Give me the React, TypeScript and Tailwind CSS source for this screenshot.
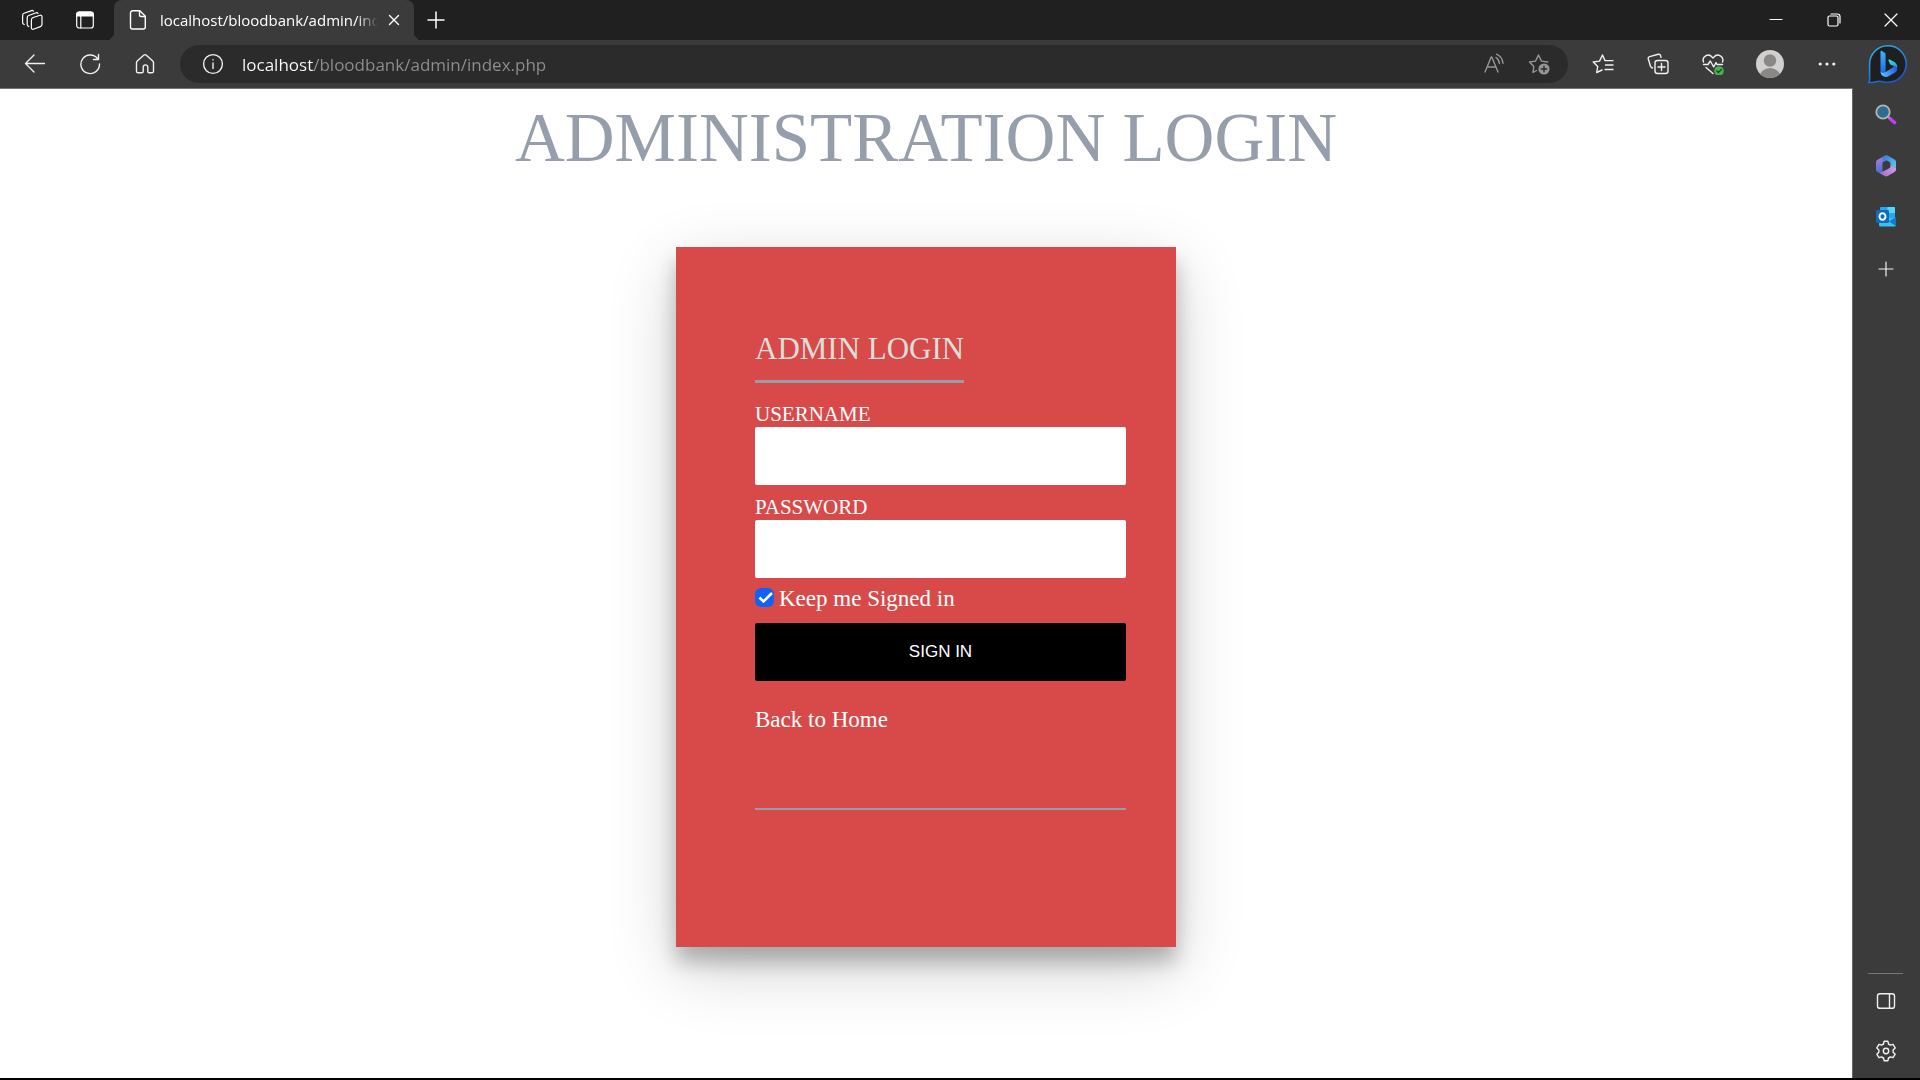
import React from "react";

type IconProps = { size?: number; children: React.ReactNode; className?: string; width?: number };

function Icon({ size = 22, children, className = "", width = 1.4 }: IconProps) {
  return (
    <svg
      width={size}
      height={size}
      viewBox={`0 0 ${size} ${size}`}
      fill="none"
      stroke="currentColor"
      strokeWidth={width}
      strokeLinecap="round"
      strokeLinejoin="round"
      className={`shrink-0 ${className}`}
      aria-hidden="true"
    >
      {children}
    </svg>
  );
}

function IconButton({ label, className = "", children }: { label: string; className?: string; children: React.ReactNode }) {
  return (
    <button type="button" aria-label={label} className={`flex shrink-0 items-center justify-center ${className}`}>
      {children}
    </button>
  );
}

function TabStrip() {
  return (
    <div className="flex h-10 items-stretch bg-[#202020] text-white">
      <IconButton label="Workspaces" className="ml-1 w-14">
        <Icon width={1.2}>
          <path d="M11.600 8.800 19 6.300a1.500 1.500 0 0 1 2 1.400v7.600a2.500 2.500 0 0 1-1.600 2.300l-7 2.700a1.500 1.500 0 0 1-2-1.400V11a2.300 2.300 0 0 1 1.200-2.200Z" />
          <path d="M7.800 17.500 7 17a2 2 0 0 1-.8-1.700V8.700a2.300 2.300 0 0 1 1.500-2.200l7.500-2.700a1.600 1.600 0 0 1 1.800.6" />
          <path d="M3.200 15.500 2.400 14.900a2 2 0 0 1-.8-1.700V6.500a2.300 2.300 0 0 1 1.500-2.200l7.500-2.700a1.600 1.600 0 0 1 1.800.5" />
        </Icon>
      </IconButton>
      <IconButton label="Tab actions" className="w-[50px]">
        <Icon size={20} width={1.2}>
          <rect x="1.700" y="2" width="16.600" height="16" rx="2.600" />
          <path d="M1.700 6V4.600A2.600 2.600 0 0 1 4.300 2h11.400a2.600 2.600 0 0 1 2.600 2.600V6Z" fill="currentColor" />
          <path d="M5.800 6v12" />
        </Icon>
      </IconButton>
      <div className="relative ml-1 flex w-[300px] items-center rounded-t-lg bg-[#3b3b3b] pl-4 pr-3">
        <span className="absolute bottom-0 -left-2 size-2 rounded-br-lg bg-transparent shadow-[4px_4px_0_#3b3b3b] [clip-path:inset(0)]" />
        <span className="absolute bottom-0 -right-2 size-2 rounded-bl-lg bg-transparent shadow-[-4px_4px_0_#3b3b3b] [clip-path:inset(0)]" />
        <Icon size={20} className="-ml-0.5" width={1.4}>
          <path d="M4.500.8h7.300l5.500 5.500V17a2 2 0 0 1-2 2H4.500a2 2 0 0 1-2-2V2.800a2 2 0 0 1 2-2Z" />
          <path d="M11.500.8v4.200a1.500 1.500 0 0 0 1.500 1.500h4.200" />
        </Icon>
        <span className="ml-3 min-w-0 flex-1 overflow-hidden font-['Open_Sans',sans-serif] text-[15px] whitespace-nowrap [mask-image:linear-gradient(to_right,black_90%,transparent)]">
          localhost/bloodbank/admin/index.php
        </span>
        <IconButton label="Close tab" className="ml-2 size-4">
          <Icon size={12}>
            <path d="m1.500 1.500 9 9m0-9-9 9" />
          </Icon>
        </IconButton>
      </div>
      <IconButton label="New tab" className="ml-2 w-7">
        <Icon size={18} width={1.5}>
          <path d="M9 1v16M1 9h16" />
        </Icon>
      </IconButton>
      <div className="flex-1" />
      <IconButton label="Minimize" className="w-[58px]">
        <Icon size={14} width={1.2}>
          <path d="M1 6.500h12" />
        </Icon>
      </IconButton>
      <IconButton label="Restore" className="w-[57px]">
        <Icon size={14} width={1.2}>
          <rect x="1" y="3" width="10" height="10" rx="1.500" />
          <path d="M4 1h6.500A2.500 2.500 0 0 1 13 3.500V10" />
        </Icon>
      </IconButton>
      <IconButton label="Close" className="w-[58px]">
        <Icon size={14} width={1.2}>
          <path d="m1 1 12 12M13 1 1 13" />
        </Icon>
      </IconButton>
    </div>
  );
}

function Toolbar() {
  return (
    <div className="flex h-12 items-center bg-[#3b3b3b] text-[#f0f0f0]">
      <div className="flex pl-[7px]">
        <IconButton label="Back" className="w-[55px]">
          <Icon>
            <path d="M20.500 10.500H1.500M10 2 1.500 10.500 10 19" />
          </Icon>
        </IconButton>
        <IconButton label="Refresh" className="w-[55px]">
          <Icon>
            <path d="M18.500 5.500A9.300 9.300 0 1 0 20.500 11M19.500 1.500v5h-5" />
          </Icon>
        </IconButton>
        <IconButton label="Home" className="w-[55px]">
          <Icon>
            <path d="M2.500 9.600a2 2 0 0 1 .7-1.500l6.500-5.900a2 2 0 0 1 2.600 0l6.500 5.900a2 2 0 0 1 .7 1.500v8.600a1.600 1.600 0 0 1-1.600 1.600h-2.700a1.400 1.400 0 0 1-1.400-1.400v-4.200a2.300 2.300 0 0 0-4.600 0v4.200a1.400 1.400 0 0 1-1.400 1.400H4.100a1.600 1.600 0 0 1-1.600-1.600Z" />
          </Icon>
        </IconButton>
      </div>
      <div className="ml-2 flex h-[38px] flex-1 items-center rounded-full bg-[#2b2b2b]">
        <IconButton label="Site information" className="ml-[22px]">
          <Icon>
            <circle cx="11" cy="11" r="9.400" />
            <path d="M11 10v5.500M11 6.800v.1" />
          </Icon>
        </IconButton>
        <input
          type="text"
          aria-label="Address"
          defaultValue="localhost/bloodbank/admin/index.php"
          className="ml-[18px] h-7 min-w-0 flex-1 bg-[linear-gradient(to_right,#ffffff_72px,#8f8f8f_72px)] bg-clip-text font-['Open_Sans',sans-serif] text-[17px] text-transparent outline-none"
        />
        <IconButton label="Read aloud" className="mr-[23px] text-[#969696]">
          <Icon>
            <path d="M2 19 8.200 4h.6L15 19M4.300 14h8.400" />
            <path d="M13 4.500a8 8 0 0 1 3.500 6M13.500 1.200a11 11 0 0 1 6.500 9" />
          </Icon>
        </IconButton>
        <IconButton label="Add to favorites" className="mr-[18px] text-[#969696]">
          <Icon>
            <path d="M8.500 17.500 5 19.500l.8-6L1.500 9l6-.9L10.500 2l3 6.100 6.300.9" />
            <circle cx="16" cy="16" r="5.600" fill="currentColor" stroke="none" />
            <path d="M16 13.200v5.600M13.200 16h5.600" stroke="#2b2b2b" />
          </Icon>
        </IconButton>
      </div>
      <div className="ml-[7px] flex items-center">
        <IconButton label="Favorites" className="w-[55px]">
          <Icon>
            <path d="m13 7.600-2.500-5.600-3 6.100-6.300.9 4.500 4.500-1 6L10 17M13 7.600h8M13.500 12H21M13 16.500h8" />
          </Icon>
        </IconButton>
        <IconButton label="Collections" className="w-[55px]">
          <Icon>
            <rect x="8" y="7.500" width="13" height="13" rx="2.500" />
            <path d="M14.500 10.500v7M11 14h7M5.500 15 4.500 14.500a2 2 0 0 1-1-1.300L1.300 6A2 2 0 0 1 2.700 3.600l8.500-2.300a2 2 0 0 1 2.400 1.400l.4 1.600" />
          </Icon>
        </IconButton>
        <IconButton label="Browser essentials" className="w-[55px]">
          <Icon>
            <path d="M1.500 9A5 5 0 0 1 10 4l1 1 1-1a5 5 0 0 1 8.500 5M1.500 11.500h4.500l2.300-3.500 3.400 6 2.300-4.500 1 2h5.500M4 14.500l7 6" />
            <circle cx="17" cy="18" r="4.800" fill="#4caf50" stroke="none" />
            <path d="m14.800 18 1.600 1.600 2.900-3.100" stroke="#24472a" />
          </Icon>
        </IconButton>
        <IconButton label="Profile" className="w-[59px]">
          <svg width="28" height="28" viewBox="0 0 28 28" aria-hidden="true">
            <clipPath id="avatar"><circle cx="14" cy="14" r="14" /></clipPath>
            <g clipPath="url(#avatar)">
              <rect width="28" height="28" fill="#d2d0ce" />
              <circle cx="14" cy="10.500" r="6.200" fill="#8a8886" />
              <ellipse cx="14" cy="27" rx="10.500" ry="9" fill="#8a8886" />
            </g>
          </svg>
        </IconButton>
        <IconButton label="Settings and more" className="w-[55px]">
          <Icon size={18}>
            <g fill="currentColor" stroke="none">
              <circle cx="2.200" cy="9" r="1.600" />
              <circle cx="9" cy="9" r="1.600" />
              <circle cx="15.800" cy="9" r="1.600" />
            </g>
          </Icon>
        </IconButton>
      </div>
      <div className="flex w-[66px] justify-center">
        <IconButton label="Bing chat">
          <svg width="40" height="40" viewBox="0 0 40 40" fill="none" aria-hidden="true">
            <defs>
              <linearGradient id="bingRing" x1="6" y1="4" x2="24" y2="38" gradientUnits="userSpaceOnUse">
                <stop stopColor="#27b5ea" /><stop offset="1" stopColor="#1a55dc" />
              </linearGradient>
              <linearGradient id="bingStem" x1="14" y1="7" x2="18" y2="31" gradientUnits="userSpaceOnUse">
                <stop stopColor="#38b6ff" /><stop offset="1" stopColor="#1b62ea" />
              </linearGradient>
              <linearGradient id="bingLeaf" x1="22" y1="15" x2="29" y2="24" gradientUnits="userSpaceOnUse">
                <stop stopColor="#2ee0d8" /><stop offset="1" stopColor="#22a5ec" />
              </linearGradient>
              <linearGradient id="bingFoot" x1="14" y1="31" x2="30" y2="23" gradientUnits="userSpaceOnUse">
                <stop stopColor="#55c8ff" /><stop offset="1" stopColor="#2453e6" />
              </linearGradient>
            </defs>
            <path d="M2 38.500c1-1.500.6-4 .6-7V20.200A18.300 18.300 0 1 1 21 38.300c-4 0-6-1-9-1S5 39 2 38.500Z" fill="#1f1f1f" stroke="url(#bingRing)" strokeWidth="1.600" />
            <path d="M13.500 7.800c0-1 .7-1.200 1.500-.7l2.600 1.700c.7.5 1 1.100 1 1.900V27l-1.500 4.500c-2.300-1-3.600-2.500-3.600-4.800Z" fill="url(#bingStem)" />
            <path d="M21.500 16.600c-.3-.9.300-1.400 1.200-1l3.800 1.900c3 1.500 4.200 4.200 3.600 7.100-.8-1.500-2.200-2.400-4-3-1.900-.6-2.900-1-3.400-2.200Z" fill="url(#bingLeaf)" />
            <path d="M13.600 27.500c1 1.700 3 1.700 5 .5l6.500-4c1.500-1 1.700-1.600 1-2.400 3 .5 4.600 2.300 4 4.400-.3 1.200-1.200 2-2.500 2.800L22 32c-2 1.200-4 1.200-6 0-1.600-1-2.500-2.500-2.400-4.500Z" fill="url(#bingFoot)" />
          </svg>
        </IconButton>
      </div>
    </div>
  );
}

function Sidebar() {
  return (
    <aside className="flex w-[68px] shrink-0 flex-col items-center border-l border-[#666] bg-[#3b3b3b] pt-4 pr-0.5 pb-4 text-[#f0f0f0]">
      <IconButton label="Search" className="h-[22px]">
        <svg width="22" height="22" viewBox="0 0 22 22" fill="none" aria-hidden="true">
          <path d="m15 14.500 4.500 4" stroke="#c43cf0" strokeWidth="3.600" strokeLinecap="round" />
          <path d="m12 12 3 2.500" stroke="#9a9a9a" strokeWidth="2" />
          <circle cx="8" cy="8" r="6.700" fill="#2b6c90" stroke="#b4b4b4" strokeWidth="1.800" />
        </svg>
      </IconButton>
      <IconButton label="Microsoft 365" className="mt-[29px] h-[22px]">
        <svg width="22" height="22" viewBox="0 0 22 22" fill="none" aria-hidden="true">
          <defs>
            <linearGradient id="m1" x1="1" y1="3" x2="8" y2="18" gradientUnits="userSpaceOnUse">
              <stop stopColor="#b07be0" /><stop offset="1" stopColor="#3c6fd6" />
            </linearGradient>
            <linearGradient id="m2" x1="8" y1="2" x2="20" y2="12" gradientUnits="userSpaceOnUse">
              <stop stopColor="#3c78dc" /><stop offset="1" stopColor="#56c8f5" />
            </linearGradient>
            <linearGradient id="m3" x1="6" y1="19" x2="20" y2="13" gradientUnits="userSpaceOnUse">
              <stop stopColor="#a86cc8" /><stop offset="1" stopColor="#cf9ce6" />
            </linearGradient>
          </defs>
          <path d="M10.500.5 2.600 4.800A3 3 0 0 0 1 7.500v7c0 1 .6 2 1.500 2.500l2 1c1.500.7 3-.3 3-1.800V8.500c0-1 .4-1.600 1.300-2.100L12 4.700V.7Z" fill="url(#m1)" />
          <path d="M8.500 1.500 10.300.6a2.500 2.500 0 0 1 2.400 0l6.800 3.900A3 3 0 0 1 21 7.100V13l-5.500-3V8.600a2 2 0 0 0-1-1.700l-3-1.600-4 2V4Z" fill="url(#m2)" />
          <path d="m4.500 18 7.500-3.600 2.500-1.500a2 2 0 0 0 1-1.700v-1.400L21 13v1.500a3 3 0 0 1-1.500 2.600l-6.800 4a3 3 0 0 1-3 0Z" fill="url(#m3)" />
        </svg>
      </IconButton>
      <IconButton label="Outlook" className="mt-[29px] h-[22px]">
        <svg width="22" height="22" viewBox="0 0 22 22" fill="none" aria-hidden="true">
          <rect x="5" y="1" width="15" height="13" rx="1" fill="#28a8ea" />
          <path d="M12.500 1H19a1 1 0 0 1 1 1v5h-7.500Z" fill="#50d9ff" />
          <path d="M4 12h17v7a1.500 1.500 0 0 1-1.500 1.500h-14A1.500 1.500 0 0 1 4 19Z" fill="#37c2f5" />
          <path d="M21 11v9L14 15.500Z" fill="#1478c8" />
          <rect x="1" y="4" width="13" height="13" rx="1.200" fill="#0f6cbd" />
          <ellipse cx="7.500" cy="10.500" rx="3" ry="3.300" stroke="#fff" strokeWidth="1.900" />
        </svg>
      </IconButton>
      <IconButton label="Customize sidebar" className="mt-[33px] h-4">
        <Icon size={16} width={1.2}>
          <path d="M8 1v14M1 8h14" />
        </Icon>
      </IconButton>
      <div className="flex-1" />
      <hr className="w-[35px] border-t border-[#777]" />
      <IconButton label="Hide sidebar" className="mt-4 h-[22px]">
        <Icon>
          <rect x="2.500" y="3.700" width="17" height="14.600" rx="2.400" />
          <path d="M14.500 3.700v14.600" />
        </Icon>
      </IconButton>
      <IconButton label="Settings" className="mt-7 h-[22px]">
        <Icon>
          <path d="m9.100 1.300-.6 2.700a7.300 7.300 0 0 0-1.900 1.100L4 4.300 1.800 7.900 3.900 10a7 7 0 0 0 0 2.200l-2.100 2 2.200 3.500 2.600-.8a7.300 7.300 0 0 0 1.900 1.100l.6 2.700h3.800l.6-2.700a7.300 7.300 0 0 0 1.900-1.100l2.600.8 2.200-3.500-2.100-2a7 7 0 0 0 0-2.200l2.100-2.100L18 4.300l-2.600.8A7.300 7.300 0 0 0 13.500 4l-.6-2.700Z" />
          <circle cx="11" cy="11" r="2.700" />
        </Icon>
      </IconButton>
    </aside>
  );
}

const field = "block h-[58px] w-full rounded-xs bg-white px-5 font-['Liberation_Sans',sans-serif] text-[17px] text-black outline-none";

function LoginPage() {
  return (
    <main className="flex-1 bg-white pb-32 font-['Liberation_Serif',serif]">
      <h1 className="pt-2.5 text-center text-[69px] leading-[78px] text-[#969eac]">ADMINISTRATION LOGIN</h1>
      <section className="mx-auto mt-[70px] min-h-[700px] w-[500px] bg-[#d84a49] pt-[82px] pr-[50px] pl-[79px] text-white shadow-[0_15px_19px_rgba(0,0,0,0.24),0_21px_63px_rgba(0,0,0,0.19)]">
        <form onSubmit={(e) => e.preventDefault()}>
          <h2 className="w-fit border-b-3 border-[#969eac] pb-3 text-[31px] leading-[39px] text-[#d9dfd8]">ADMIN LOGIN</h2>
          <label htmlFor="username" className="mt-[19px] block pb-px text-[21px] leading-6">USERNAME</label>
          <input id="username" type="text" className={field} />
          <label htmlFor="password" className="mt-2.5 block pb-px text-[21px] leading-6">PASSWORD</label>
          <input id="password" type="password" className={field} />
          <div className="mt-[7px] flex h-7 items-start text-[23px] leading-7">
            <span className="relative mt-[3px] size-[19px]">
              <input id="keep" type="checkbox" defaultChecked className="block size-[19px] appearance-none rounded-md bg-[#0f62f4]" />
              <svg viewBox="0 0 19 19" className="pointer-events-none absolute inset-0" fill="none" stroke="#fff" strokeWidth="2.600" aria-hidden="true">
                <path d="m4.500 9.500 4 4L17 5" />
              </svg>
            </span>
            <label htmlFor="keep" className="ml-[5px]">Keep me Signed in</label>
          </div>
          <button type="submit" className="mt-2.5 block h-[58px] w-full rounded-xs bg-black font-['Liberation_Sans',sans-serif] text-[17px]">SIGN IN</button>
        </form>
        <a href="#home" className="mt-[26px] block w-fit text-[23px] leading-[26px]">Back to Home</a>
        <hr className="mt-[75px] border-t-2 border-[#969eac]" />
      </section>
    </main>
  );
}

export default function App() {
  return (
    <div className="flex min-h-screen flex-col border-b-2 border-black">
      <TabStrip />
      <Toolbar />
      <div className="flex flex-1">
        <div className="flex flex-1 flex-col border-t border-[#777]">
          <LoginPage />
        </div>
        <Sidebar />
      </div>
    </div>
  );
}
